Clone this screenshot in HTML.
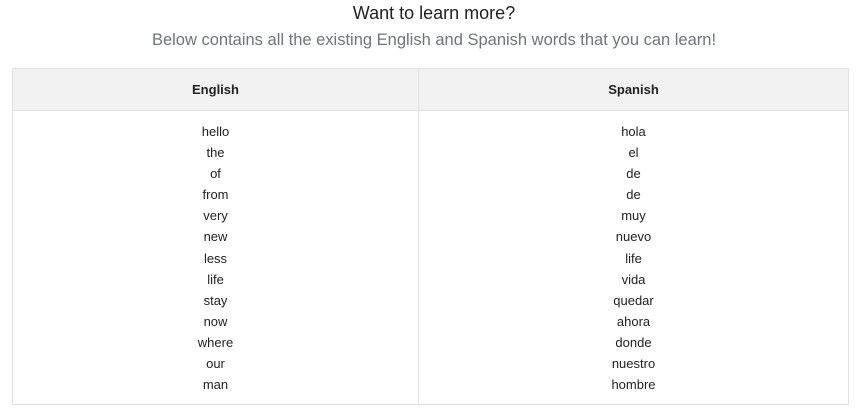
<!DOCTYPE html>
<html><head><style>
body{margin:0;background:#fff;font-family:"Liberation Sans",sans-serif;width:868px;height:418px;overflow:hidden}
.t1{position:absolute;top:3px;left:0;width:868px;text-align:center;font-size:18px;color:#222}
.t2{position:absolute;top:31px;left:0;width:868px;text-align:center;font-size:16.5px;color:#6c757d;font-weight:300}
table{position:absolute;left:12px;top:68px;width:837px;border-collapse:collapse;table-layout:fixed}
th,td{border:1px solid #dee2e6;text-align:center;color:#222}
th{background:#f2f2f2;height:41px;font-size:13px;font-weight:bold;padding:0}
td{font-size:13px;line-height:21.1px;padding:10px 0 9px;vertical-align:top}
</style></head><body>
<div class="t1">Want to learn more?</div>
<div class="t2">Below contains all the existing English and Spanish words that you can learn!</div>
<table><colgroup><col style="width:406px"><col></colgroup><tr><th>English</th><th>Spanish</th></tr>
<tr><td>hello<br>the<br>of<br>from<br>very<br>new<br>less<br>life<br>stay<br>now<br>where<br>our<br>man</td>
<td>hola<br>el<br>de<br>de<br>muy<br>nuevo<br>life<br>vida<br>quedar<br>ahora<br>donde<br>nuestro<br>hombre</td></tr></table>
</body></html>
